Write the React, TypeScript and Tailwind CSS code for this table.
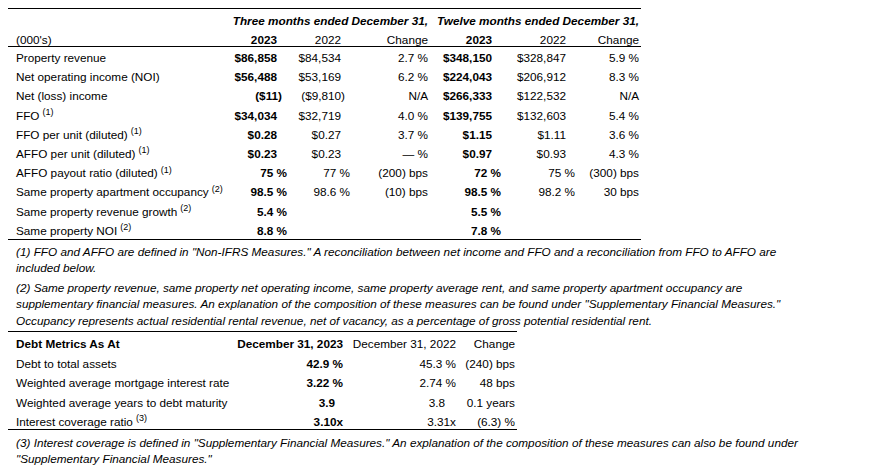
import React from "react";

type Cell = { t: string; pad: string };

type Row = {
  label: string;
  sup?: string;
  cells: (Cell | null)[];
};

// padding keeps the Excel-style alignment: % sits further right than $ figures
const d1 = "pr-[12px]";
const d = "pr-[11px]";
const p = "pr-[2px]";
const n = "pr-[7px]";

const rows: Row[] = [
  {
    label: "Property revenue",
    cells: [
      { t: "$86,858", pad: d1 },
      { t: "$84,534", pad: d },
      { t: "2.7 %", pad: p },
      { t: "$348,150", pad: d },
      { t: "$328,847", pad: d },
      { t: "5.9 %", pad: p },
    ],
  },
  {
    label: "Net operating income (NOI)",
    cells: [
      { t: "$56,488", pad: d1 },
      { t: "$53,169", pad: d },
      { t: "6.2 %", pad: p },
      { t: "$224,043", pad: d },
      { t: "$206,912", pad: d },
      { t: "8.3 %", pad: p },
    ],
  },
  {
    label: "Net (loss) income",
    cells: [
      { t: "($11)", pad: n },
      { t: "($9,810)", pad: n },
      { t: "N/A", pad: p },
      { t: "$266,333", pad: d },
      { t: "$122,532", pad: d },
      { t: "N/A", pad: p },
    ],
  },
  {
    label: "FFO",
    sup: "(1)",
    cells: [
      { t: "$34,034", pad: d1 },
      { t: "$32,719", pad: d },
      { t: "4.0 %", pad: p },
      { t: "$139,755", pad: d },
      { t: "$132,603", pad: d },
      { t: "5.4 %", pad: p },
    ],
  },
  {
    label: "FFO per unit (diluted)",
    sup: "(1)",
    cells: [
      { t: "$0.28", pad: d1 },
      { t: "$0.27", pad: d },
      { t: "3.7 %", pad: p },
      { t: "$1.15", pad: d },
      { t: "$1.11", pad: d },
      { t: "3.6 %", pad: p },
    ],
  },
  {
    label: "AFFO per unit (diluted)",
    sup: "(1)",
    cells: [
      { t: "$0.23", pad: d1 },
      { t: "$0.23", pad: d },
      { t: "— %", pad: p },
      { t: "$0.97", pad: d },
      { t: "$0.93", pad: d },
      { t: "4.3 %", pad: p },
    ],
  },
  {
    label: "AFFO payout ratio (diluted)",
    sup: "(1)",
    cells: [
      { t: "75 %", pad: p },
      { t: "77 %", pad: p },
      { t: "(200) bps", pad: p },
      { t: "72 %", pad: p },
      { t: "75 %", pad: p },
      { t: "(300) bps", pad: p },
    ],
  },
  {
    label: "Same property apartment occupancy",
    sup: "(2)",
    cells: [
      { t: "98.5 %", pad: p },
      { t: "98.6 %", pad: p },
      { t: "(10) bps", pad: p },
      { t: "98.5 %", pad: p },
      { t: "98.2 %", pad: p },
      { t: "30 bps", pad: p },
    ],
  },
  {
    label: "Same property revenue growth",
    sup: "(2)",
    cells: [{ t: "5.4 %", pad: p }, null, null, { t: "5.5 %", pad: p }, null, null],
  },
  {
    label: "Same property NOI",
    sup: "(2)",
    cells: [{ t: "8.8 %", pad: p }, null, null, { t: "7.8 %", pad: p }, null, null],
  },
];

const debtRows = [
  { label: "Debt to total assets", a: "42.9 %", aPad: "pr-[2px]", b: "45.3 %", bPad: "pr-[2px]", c: "(240) bps" },
  { label: "Weighted average mortgage interest rate", a: "3.22 %", aPad: "pr-[2px]", b: "2.74 %", bPad: "pr-[2px]", c: "48 bps" },
  { label: "Weighted average years to debt maturity", a: "3.9", aPad: "pr-[10px]", b: "3.8", bPad: "pr-[13px]", c: "0.1 years" },
  { label: "Interest coverage ratio", sup: "(3)", a: "3.10x", aPad: "pr-[2px]", b: "3.31x", bPad: "pr-[2px]", c: "(6.3) %" },
];

function Sup({ children }: { children: React.ReactNode }) {
  return <sup className="ml-[3px] text-[9px]">{children}</sup>;
}

export default function App() {
  return (
    <div className="min-h-[470px] w-[880px] bg-white pl-[8px] pt-[8px] font-['Liberation_Sans',Arial,sans-serif] text-[11.75px] text-black">
      {/* results table */}
      <div className="w-[633px] border-y border-black">
        <div className="grid h-[21px] grid-cols-[218px_63px_63px_78px_73px_74px_64px] items-center whitespace-nowrap pt-[2px] font-bold italic">
          <div />
          <div className="col-span-3 pr-[2px] text-right">Three months ended December 31,</div>
          <div className="col-span-3 pr-[2px] text-right">Twelve months ended December 31,</div>
        </div>
        <div className="grid h-[17px] grid-cols-[218px_63px_63px_78px_73px_74px_64px] items-center border-b border-black pt-[1px]">
          <div className="pl-[8px]">(000's)</div>
          <div className="pr-[12px] text-right font-bold">2023</div>
          <div className="pr-[11px] text-right">2022</div>
          <div className="pr-[2px] text-right">Change</div>
          <div className="pr-[11px] text-right font-bold">2023</div>
          <div className="pr-[11px] text-right">2022</div>
          <div className="pr-[2px] text-right">Change</div>
        </div>
        {rows.map((row) => (
          <div
            key={row.label}
            className="grid h-[19.2px] grid-cols-[218px_63px_63px_78px_73px_74px_64px] items-center whitespace-nowrap pt-[2px]"
          >
            <div className="pl-[8px]">
              {row.label}
              {row.sup && <Sup>{row.sup}</Sup>}
            </div>
            {row.cells.map((c, i) => (
              <div
                key={i}
                className={`text-right ${c ? c.pad : ""} ${i === 0 || i === 3 ? "font-bold" : ""}`}
              >
                {c ? c.t : ""}
              </div>
            ))}
          </div>
        ))}
      </div>

      {/* footnotes */}
      <div className="w-[509px] whitespace-nowrap border-b border-black pb-[2px] pl-[8px] pt-[4px] italic leading-[16.5px]">
        <p>
          (1) FFO and AFFO are defined in "Non-IFRS Measures." A reconciliation between net income and FFO and a
          reconciliation from FFO to AFFO are
          <br />
          included below.
        </p>
        <p className="mt-[3px]">
          (2) Same property revenue, same property net operating income, same property average rent, and same property
          apartment occupancy are
          <br />
          supplementary financial measures. An explanation of the composition of these measures can be found under
          "Supplementary Financial Measures."
          <br />
          Occupancy represents actual residential rental revenue, net of vacancy, as a percentage of gross potential
          residential rent.
        </p>
      </div>

      {/* debt metrics */}
      <div className="w-[509px] border-b border-black">
        <div className="grid h-[19.4px] grid-cols-[222px_115px_113px_59px] items-center whitespace-nowrap pt-[3px]">
          <div className="pl-[8px] font-bold">Debt Metrics As At</div>
          <div className="pr-[2px] text-right font-bold">December 31, 2023</div>
          <div className="pr-[2px] text-right">December 31, 2022</div>
          <div className="pr-[2px] text-right">Change</div>
        </div>
        {debtRows.map((r) => (
          <div
            key={r.label}
            className="grid h-[19.4px] grid-cols-[222px_115px_113px_59px] items-center whitespace-nowrap pt-[3px]"
          >
            <div className="pl-[8px]">
              {r.label}
              {r.sup && <Sup>{r.sup}</Sup>}
            </div>
            <div className={`text-right font-bold ${r.aPad}`}>{r.a}</div>
            <div className={`text-right ${r.bPad}`}>{r.b}</div>
            <div className="pr-[2px] text-right">{r.c}</div>
          </div>
        ))}
      </div>

      <div className="whitespace-nowrap pl-[8px] pt-[5px] italic leading-[16px]">
        (3) Interest coverage is defined in "Supplementary Financial Measures." An explanation of the composition of
        these measures can also be found under
        <br />
        "Supplementary Financial Measures."
      </div>
    </div>
  );
}
